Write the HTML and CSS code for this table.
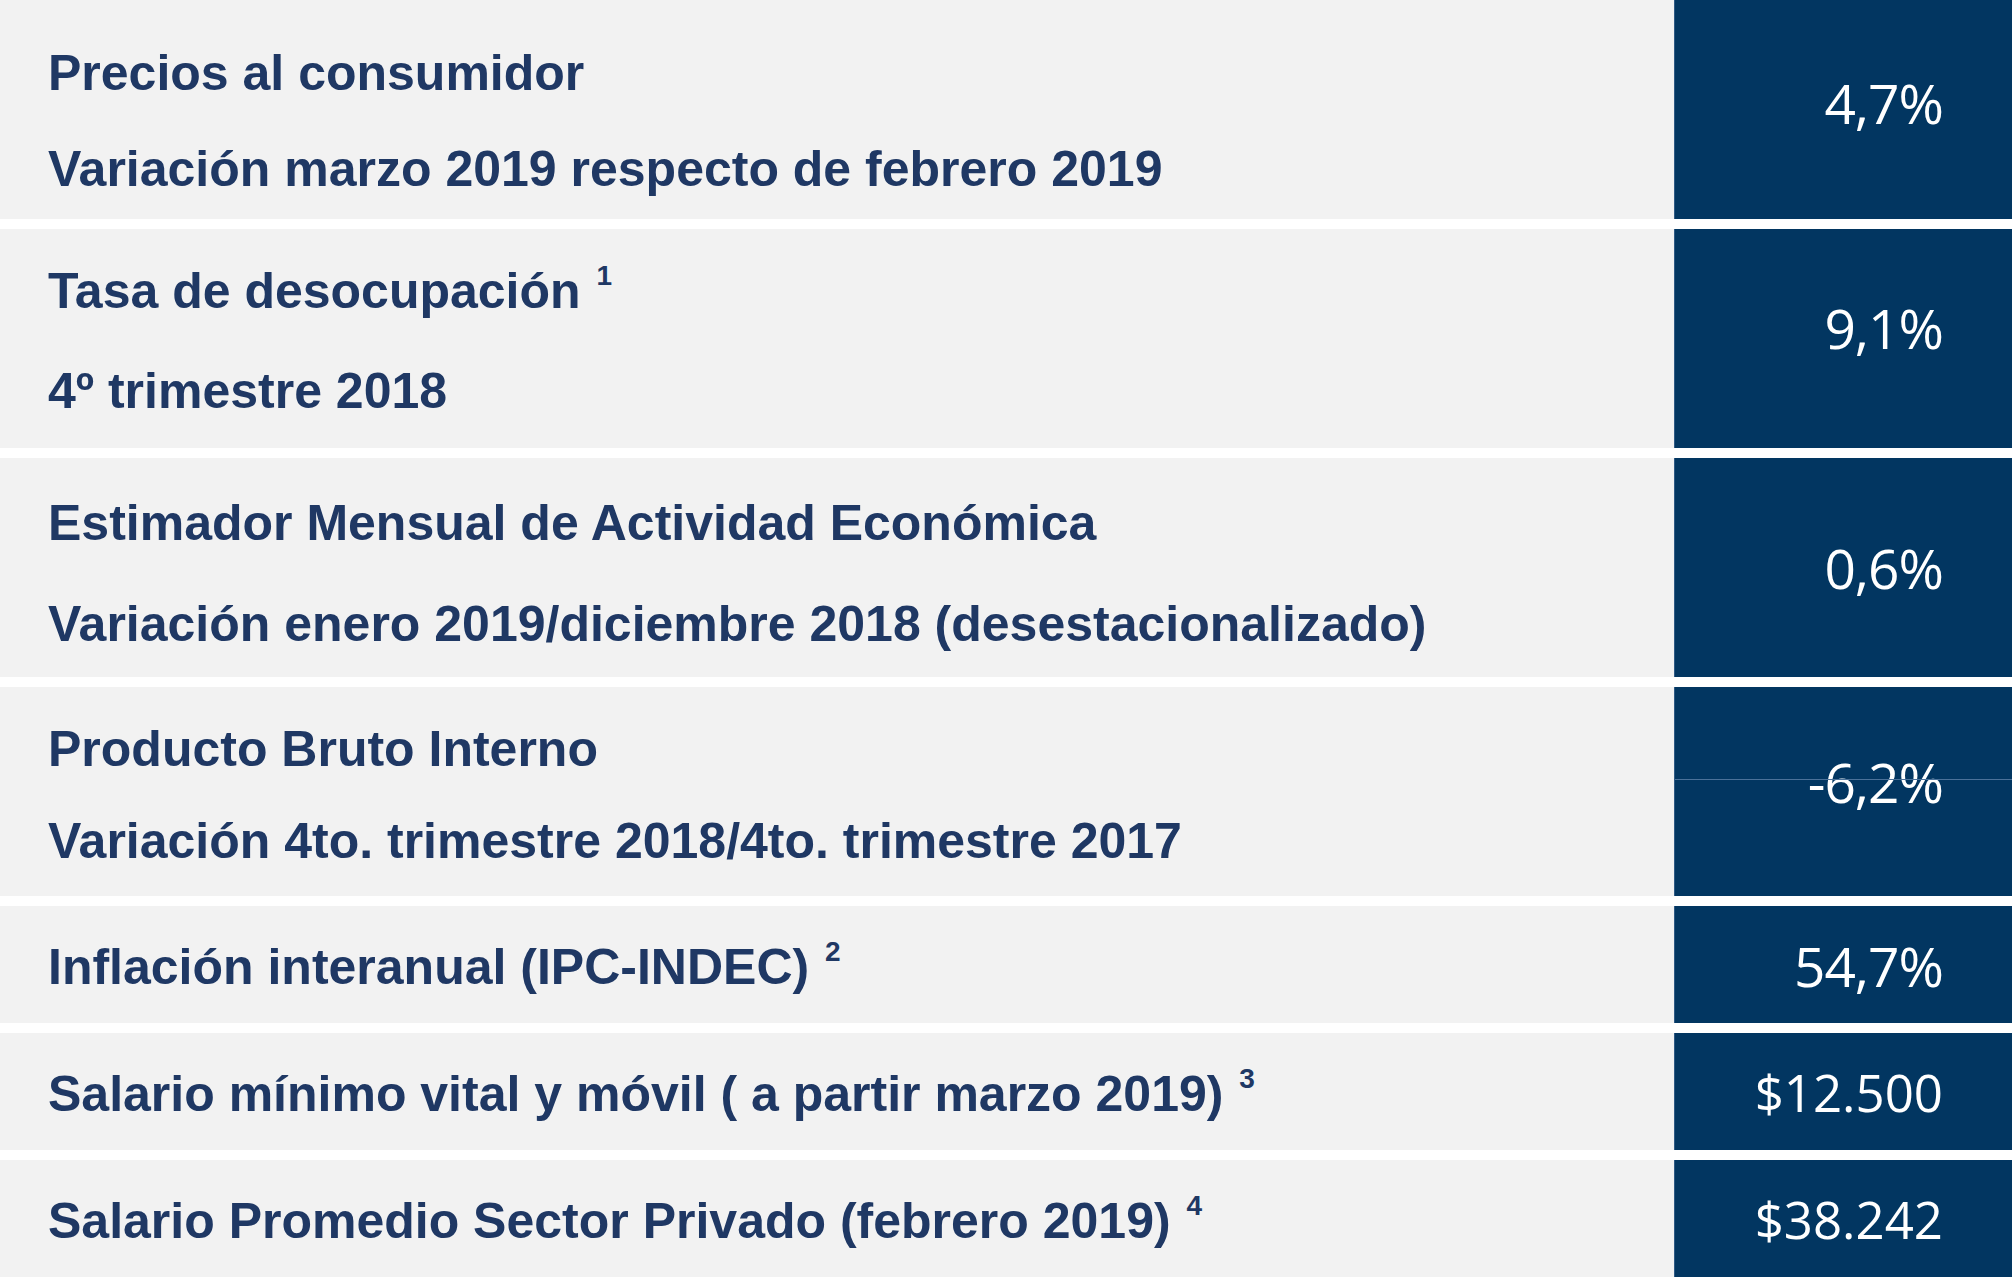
FILE: index.html
```html
<!DOCTYPE html>
<html lang="es">
<head>
<meta charset="utf-8">
<title>Indicadores</title>
<link rel="stylesheet" href="styles.css">
</head>
<body>
<main class="table">
  <section class="row row-1">
    <div class="label">
      <div class="line">Precios al consumidor</div>
      <div class="line">Variación marzo 2019 respecto de febrero 2019</div>
    </div>
    <div class="value">4,7%</div>
  </section>
  <section class="row row-2">
    <div class="label">
      <div class="line">Tasa de desocupación <sup class="note">1</sup></div>
      <div class="line">4º trimestre 2018</div>
    </div>
    <div class="value">9,1%</div>
  </section>
  <section class="row row-3">
    <div class="label">
      <div class="line">Estimador Mensual de Actividad Económica</div>
      <div class="line">Variación enero 2019/diciembre 2018 (desestacionalizado)</div>
    </div>
    <div class="value">0,6%</div>
  </section>
  <section class="row row-4">
    <div class="label">
      <div class="line">Producto Bruto Interno</div>
      <div class="line">Variación 4to. trimestre 2018/4to. trimestre 2017</div>
    </div>
    <div class="value value-ruled"><span class="rule"></span>-6,2%</div>
  </section>
  <section class="row row-single">
    <div class="label">
      <div class="line">Inflación interanual (IPC-INDEC) <sup class="note">2</sup></div>
    </div>
    <div class="value">54,7%</div>
  </section>
  <section class="row row-single">
    <div class="label">
      <div class="line">Salario mínimo vital y móvil ( a partir marzo 2019) <sup class="note">3</sup></div>
    </div>
    <div class="value money">$12.500</div>
  </section>
  <section class="row row-single">
    <div class="label">
      <div class="line">Salario Promedio Sector Privado (febrero 2019) <sup class="note">4</sup></div>
    </div>
    <div class="value money">$38.242</div>
  </section>
</main>
</body>
</html>
```

FILE: styles.css
```css
html, body {
  margin: 0;
  padding: 0;
  background: #ffffff;
}

.table {
  display: flex;
  flex-direction: column;
  gap: 10px;
  width: 2012px;
}

.row {
  display: flex;
  height: 219px;
}

.row-4 { height: 209px; }
.row-single { height: 117px; }

.label {
  flex: 1;
  background: #f2f2f2;
  padding-left: 48px;
  font-family: "Liberation Sans", Arial, sans-serif;
  font-weight: bold;
  font-size: 50px;
  color: #1f3864;
  box-sizing: border-box;
}

.line {
  height: 100px;
  line-height: 100px;
  white-space: nowrap;
}

.row-1 .label { padding-top: 23px; }
.row-1 .line + .line { margin-top: -4px; }
.row-2 .label { padding-top: 12px; }
.row-3 .label { padding-top: 15px; }
.row-3 .line + .line { margin-top: 1px; }
.row-4 .label { padding-top: 12px; }
.row-4 .line + .line { margin-top: -8px; }

.row-single .label {
  display: flex;
  align-items: center;
  padding-top: 4px;
}

.note {
  font-size: 28px;
  vertical-align: 23px;
  line-height: 0;
  margin-left: 2px;
}

.value {
  position: relative;
  width: 338px;
  box-sizing: border-box;
  background: #023661;
  border-left: 1px solid #2f5a85;
  color: #ffffff;
  font-family: "Open Sans", "Noto Sans", sans-serif;
  font-size: 55px;
  letter-spacing: -1px;
  display: flex;
  align-items: center;
  justify-content: flex-end;
  padding-right: 69px;
}

.money {
  font-size: 51px;
  letter-spacing: 0;
}

.row-1 .value { padding-bottom: 15px; }
.row-2 .value { padding-bottom: 23px; }
.row-4 .value { padding-bottom: 21px; }
.row-single .value { padding-top: 1px; }

.rule {
  position: absolute;
  left: 0;
  right: 0;
  top: 92px;
  height: 1px;
  background: #4b7199;
}
```
